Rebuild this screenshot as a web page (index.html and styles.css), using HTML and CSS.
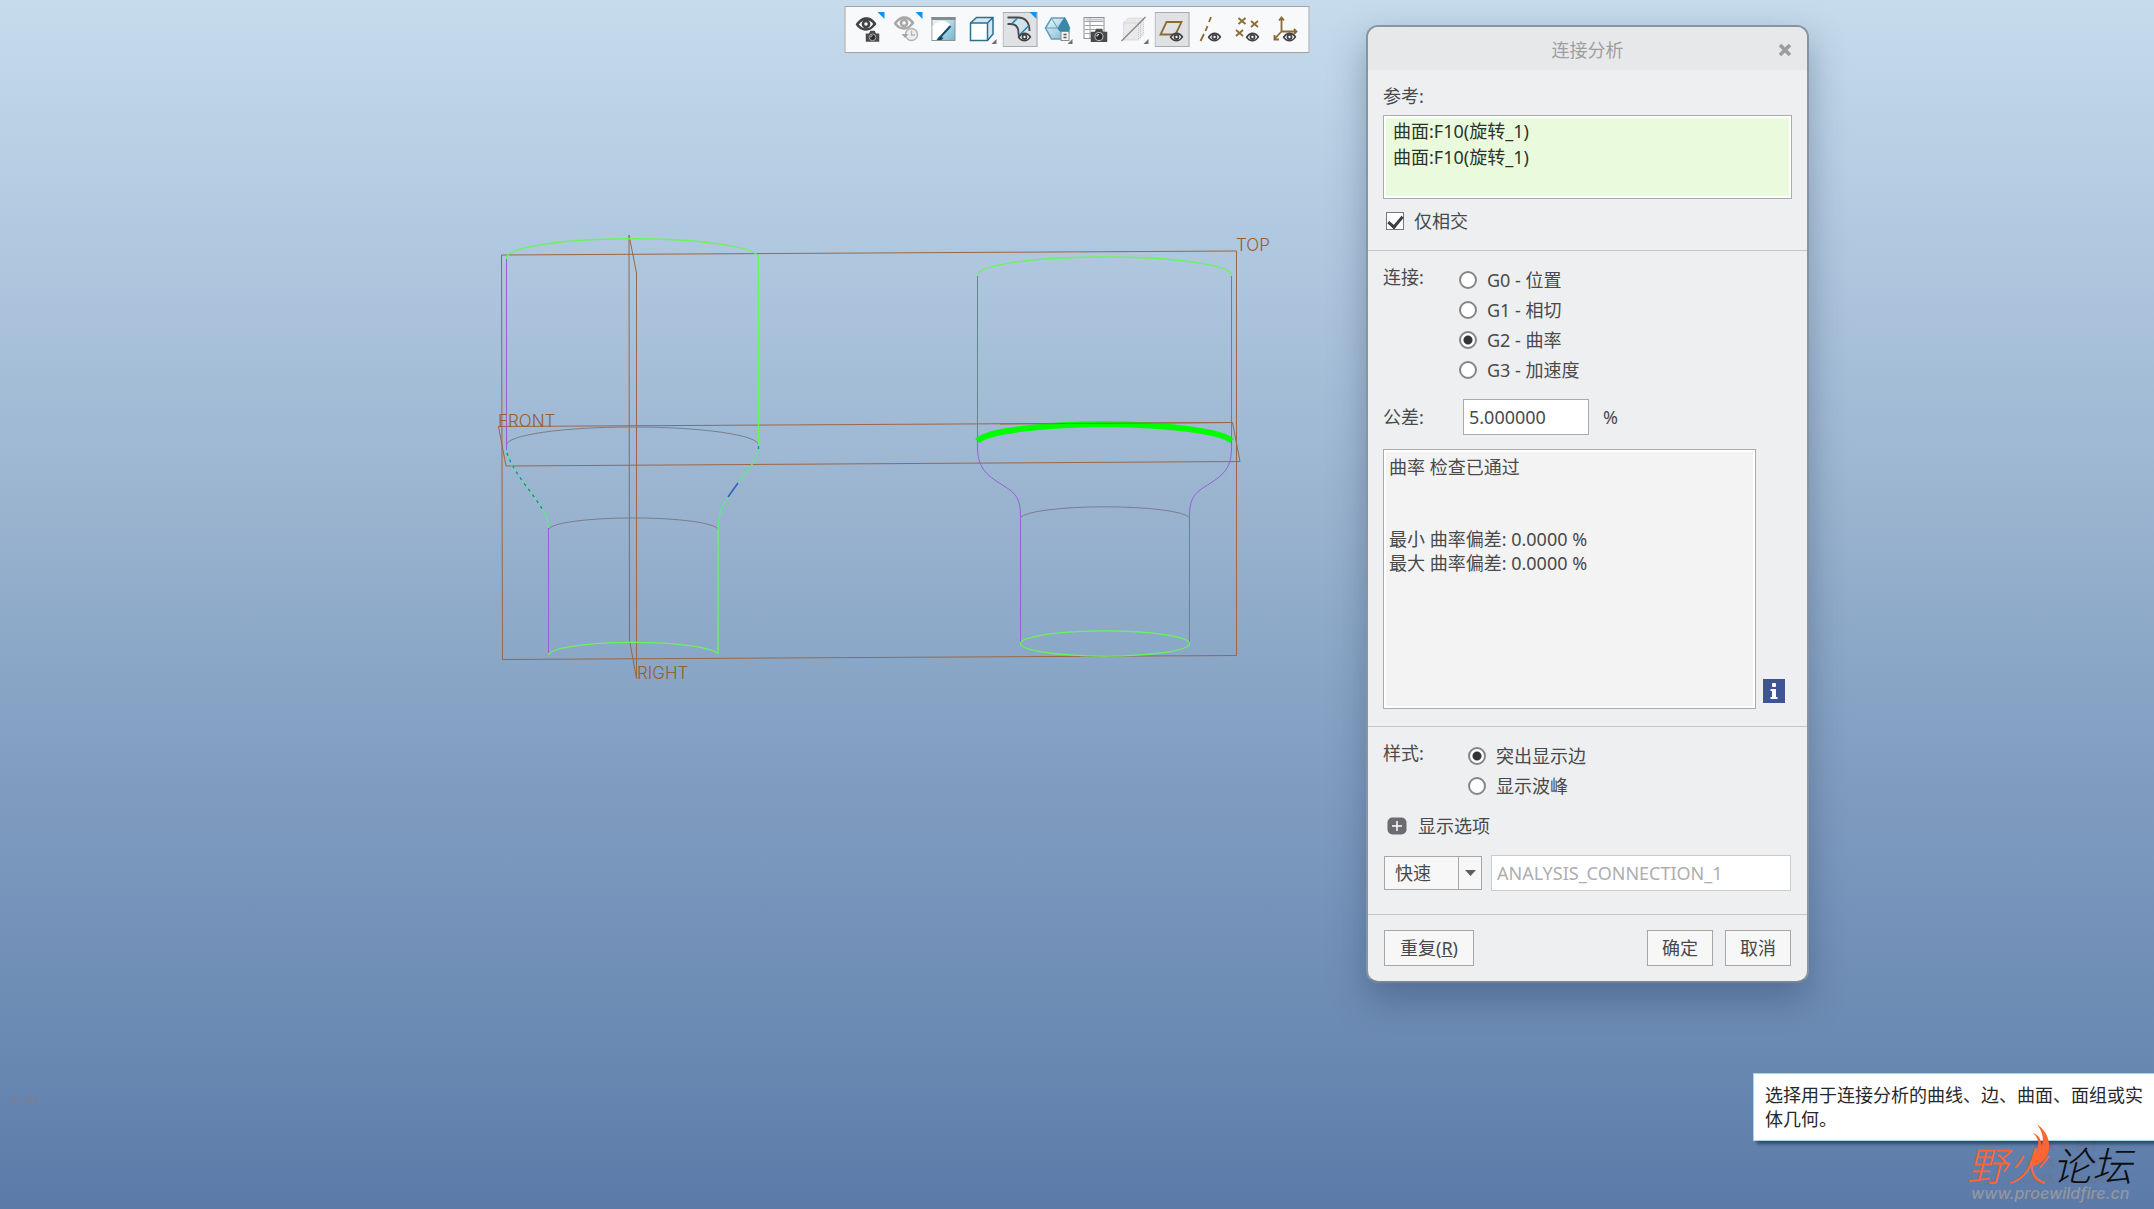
FILE: index.html
```html
<!DOCTYPE html>
<html lang="zh-CN">
<head>
    <meta charset="UTF-8">
    <meta name="viewport" content="width=device-width, initial-scale=1.0">
    <title>连接分析</title>
    <link rel="stylesheet" href="styles.css">
</head>
<body>
    <main class="viewport">
        <!-- Model view: datum planes, edges and curves -->
        <svg class="model" viewBox="0 0 2154 1209" preserveAspectRatio="xMinYMin meet" fill="none">
            <g class="datum">
                <path d="M501.5 255 L1236.5 251 V655.5 L502.5 659.5 Z"/>
                <path d="M498.5 426.5 L1232.5 422.5 L1240 461.5 L506 466 Z"/>
                <path d="M629 235 L636.5 273 V678.5 L629.5 640 Z"/>
            </g>
            <g class="edge-gray">
                <path d="M506.5 445 A126 18 0 0 1 758.5 445"/>
                <path d="M548.5 529 A85 12 0 0 1 718 529"/>
                <path d="M1020.5 517.5 A85 12 0 0 1 1189.5 517.5"/>
            </g>
            <g class="edge-purple">
                <path d="M506.5 259 V451"/>
                <path d="M548.5 523 V653"/>
                <path d="M977.5 276 V443 C977 464 982 472 1000 483.5 C1012 491 1020.5 495 1020.5 515 V642"/>
                <path d="M1231.5 276 V443 C1232 464 1228 472 1210 483.5 C1198 491 1189.5 495 1189.5 515 V642"/>
            </g>
            <g class="edge-green">
                <path d="M506.5 258.500 A126 19 0 0 1 758.5 257 V446"/>
                <path d="M718 527 V654"/>
                <path d="M548.5 655 A85 13 0 0 1 718 654"/>
                <path d="M977.5 275 A127 18 0 0 1 1231.5 275"/>
                <ellipse cx="1105" cy="643.5" rx="84.5" ry="12.7"/>
            </g>
            <g class="neck">
                <path d="M506.5 450 C507 459 514 469 523 482 L535 498 C543 509 548.5 516 548.5 528"/>
                <path d="M758.5 444 V451 C757 459 751 466 738 483 L727 499 C722 507 718 514 718 528"/>
            </g>
            <g class="neck-blue">
                <path d="M507 453 C510 462 514 469 523 482 L535 498 L543 510"/>
                <path d="M758.5 446 V453"/>
            </g>
            <path class="neck-solid" d="M738 483 L728 497"/>
            <path class="highlight" d="M977.5 441 A128 19 0 0 1 1231.5 441"/>
            <path class="datum" d="M1000 424 L1232.5 422.5"/>
            <g class="datum-name">
                <text x="498" y="427">FRONT</text>
                <text x="637" y="679">RIGHT</text>
                <text x="1236" y="251">TOP</text>
            </g>
        </svg>

        <div class="toolbar" role="toolbar">
            <svg class="symbols">
                <defs>
                    <linearGradient id="sky" x1="0" y1="0" x2="1" y2="1">
                        <stop offset="0" stop-color="#f4fbfd"/>
                        <stop offset="1" stop-color="#6fb4cf"/>
                    </linearGradient>
                </defs>
                <symbol id="eye" viewBox="0 0 22 14">
                    <path d="M0 7.5 C4 1.5 8 0 11 0 C15 0 19 2 22 7 C18 12 14.5 14 11 14 C7 14 3 12 0 7.5 Z" fill="currentColor"/>
                    <path d="M3.5 7.5 C6 4 8 3 11 3 C14 3 16.5 4 18.5 7 C16 10.5 14 11.5 11 11.5 C8 11.5 6 10.5 3.5 7.5 Z" fill="#fff"/>
                    <circle cx="11" cy="7" r="4.6" fill="currentColor"/>
                    <circle cx="11" cy="7" r="1.8" fill="#fff"/>
                </symbol>
                <symbol id="camera" viewBox="0 0 16 13">
                    <path d="M0 3.5 H4 L5.5 0.5 H10.5 L12 3.5 H16 V13 H0 Z" fill="#4b4b4d"/>
                    <circle cx="8" cy="8" r="3.8" fill="#2d2d2f" stroke="#b9b9b9"/>
                    <path d="M6 8 A2 2 0 0 1 8 6" stroke="#eee" fill="none"/>
                </symbol>
            </svg>
            <button class="tool" type="button" aria-label="视图">
                <svg viewBox="0 0 35 35">
                    <use href="#eye" x="5" y="5" width="21" height="14"/>
                    <use href="#camera" x="15" y="18" width="14" height="12"/>
                    <path class="corner" d="M27 0 H34 V7 Z"/>
                </svg>
            </button>
            <button class="tool tool-disabled" type="button" aria-label="上一视图">
                <svg viewBox="0 0 35 35">
                    <use href="#eye" x="5" y="4" width="21" height="14"/>
                    <circle cx="23" cy="22.5" r="6" fill="#eee" stroke="#b3b3b3" stroke-width="1.5"/>
                    <path d="M23 18.5 V23 H26.5" stroke="#b3b3b3" stroke-width="1.3" fill="none"/>
                    <path d="M13 22 H20 L16.5 26 Z" fill="#a5a5a5"/>
                    <path class="corner" d="M27 0 H34 V7 Z"/>
                </svg>
            </button>
            <button class="tool" type="button" aria-label="重画">
                <svg viewBox="0 0 35 35">
                    <rect x="5.5" y="5.5" width="23" height="23" fill="url(#sky)" stroke="#8d9499"/>
                    <path d="M5 5 H29 V8 H5 Z" fill="#858a8e"/>
                    <path d="M6 14 C12 7 20 8 24 13 L14 28 H6 Z" fill="#fff"/>
                    <path d="M24 14 L14 25" stroke="#0f4a6b" stroke-width="2"/>
                    <path d="M10 28 L13 24 L17 26 L15 28 Z" fill="#0f4a6b"/>
                </svg>
            </button>
            <button class="tool" type="button" aria-label="显示样式">
                <svg viewBox="0 0 35 35">
                    <path d="M6 11 L12 5.5 H29 L23 11 Z M23 11 L29 5.5 V22 L23 28 Z" fill="#d3e9f2"/>
                    <path d="M6 11 H23 V28.5 H6 Z" fill="#fff"/>
                    <path d="M6 11 L12 5.5 H28.5 V22 L23 28.5 H6 Z M6 11 H23 V28.5 M23 11 L28.5 5.5" fill="none" stroke="#2e6f8e" stroke-width="1.5"/>
                    <path class="more" d="M32 27 V32 H27 Z"/>
                </svg>
            </button>
            <button class="tool tool-active" type="button" aria-label="曲面显示">
                <svg viewBox="0 0 35 35">
                    <path d="M12 5 H15 C24 5 27 11 27 18 L19 27 C16 24 18 19 16 16 C14 13 12 12 6 12 Z" fill="#d4e3ea"/>
                    <path d="M5 5.5 H15 C24 5.5 27 11 27 19 M5 12 H8 C14 12 16 16 16 21 C16 25 17 26 19 27.5" fill="none" stroke="#4a4a4c" stroke-width="1.8"/>
                    <path d="M15 6 L9 12 M26 14 L18 22" stroke="#2687ad" stroke-width="1.6"/>
                    <use href="#eye" x="15" y="20" width="14" height="10"/>
                    <path class="corner" d="M27 0 H34 V7 Z"/>
                </svg>
            </button>
            <button class="tool" type="button" aria-label="视图管理器">
                <svg viewBox="0 0 35 35">
                    <path d="M5 16 L11 6 H24 L29 16 L24 27 H11 Z" fill="url(#sky)" stroke="#5d9fba" stroke-width="1.5"/>
                    <path d="M5 16 H17 M11 6 L17 16" fill="none" stroke="#5d9fba"/>
                    <path d="M24 5 C21 10 18 13 17 17 L21 21 H29 V15 C28 11 26 8 24 5 Z" fill="#3986a6"/>
                    <rect x="20.5" y="19.5" width="8" height="9" fill="#f6f6f6" stroke="#8c8c8c"/>
                    <path d="M23 22.5 H26 M23 25.5 H26" stroke="#555" stroke-width="1.5"/>
                    <path class="more" d="M32 27 V32 H27 Z"/>
                </svg>
            </button>
            <button class="tool" type="button" aria-label="已保存方向">
                <svg viewBox="0 0 35 35">
                    <rect x="5.5" y="5.5" width="20" height="21" fill="#fff" stroke="#8d9296"/>
                    <path d="M6 9.5 H25 M6 13.5 H25 M6 17.5 H25 M6 21.5 H25 M11.5 6 V26" stroke="#9da2a6"/>
                    <path d="M7 7.5 H25" stroke="#c6cacd" stroke-width="2"/>
                    <use href="#camera" x="12" y="16" width="17" height="14"/>
                </svg>
            </button>
            <button class="tool" type="button" aria-label="透视图">
                <svg viewBox="0 0 35 35">
                    <path d="M7 11 L12 6 H27 V22 L22 28 H7 Z" fill="#e9e9ea"/>
                    <path d="M7 11 L12 6 H27 V22 L22 28 H7 Z M7 11 H22 V28 M22 11 L27 6 M24 9 V26" fill="none" stroke="#c6c6c8" stroke-dasharray="1 1"/>
                    <path d="M5 29 L29 5" stroke="#8b8b8d" stroke-width="1.5"/>
                    <path class="more" d="M32 27 V32 H27 Z"/>
                </svg>
            </button>
            <button class="tool tool-active" type="button" aria-label="平面显示">
                <svg viewBox="0 0 35 35">
                    <path class="brass" d="M12 10 H27 L21 22.5 H6 Z"/>
                    <use href="#eye" x="15" y="20" width="14" height="10"/>
                </svg>
            </button>
            <button class="tool" type="button" aria-label="轴显示">
                <svg viewBox="0 0 35 35">
                    <path class="brass" d="M18.5 5 L16.5 10 M15 14 L13 19 M11.5 22 L8 29"/>
                    <use href="#eye" x="15" y="20" width="14" height="10"/>
                </svg>
            </button>
            <button class="tool" type="button" aria-label="点显示">
                <svg viewBox="0 0 35 35">
                    <path class="brass" d="M8 6 L15 12 M15 6 L8 12 M20.5 9 L27.5 15 M27.5 9 L20.5 15 M5.5 18 L12.5 24 M12.5 18 L5.5 24"/>
                    <use href="#eye" x="15" y="20" width="14" height="10"/>
                </svg>
            </button>
            <button class="tool" type="button" aria-label="坐标系显示">
                <svg viewBox="0 0 35 35">
                    <path class="brass" d="M13 6 V19.5 H28 M13 19.5 L6 27 M10.5 8.5 L13 5.5 L15.5 8.5 M25.5 17 L28 19.5 L25.5 22 M6 23 V27.5 H10.5"/>
                    <use href="#eye" x="14" y="20" width="14" height="10"/>
                </svg>
            </button>
        </div>

        <form class="dialog">
            <header class="dialog-title">
                <h1>连接分析</h1>
                <button class="close" type="button" aria-label="关闭">
                    <svg viewBox="0 0 14 14"><path d="M2 2 L12 12 M12 2 L2 12" stroke="#9b9c9d" stroke-width="3.6"/></svg>
                </button>
            </header>

            <section class="section references">
                <h2>参考:</h2>
                <ul class="collector">
                    <li>曲面:F10(旋转_1)</li>
                    <li>曲面:F10(旋转_1)</li>
                </ul>
                <label class="option check-option"><input class="check" type="checkbox" checked>仅相交</label>
            </section>

            <section class="section">
                <div class="group">
                    <h2>连接:</h2>
                    <div class="options">
                        <label class="option"><input class="radio" type="radio" name="connection">G0 - 位置</label>
                        <label class="option"><input class="radio" type="radio" name="connection">G1 - 相切</label>
                        <label class="option"><input class="radio" type="radio" name="connection" checked>G2 - 曲率</label>
                        <label class="option"><input class="radio" type="radio" name="connection">G3 - 加速度</label>
                    </div>
                </div>
                <div class="tolerance">
                    <label for="tolerance">公差:</label>
                    <input class="field" id="tolerance" type="text" value="5.000000">
                    <span>%</span>
                </div>
                <div class="result-row">
                    <textarea class="result" aria-label="结果" readonly>曲率 检查已通过


最小 曲率偏差: 0.0000 %
最大 曲率偏差: 0.0000 %</textarea>
                    <button class="info" type="button" aria-label="信息">
                        <svg viewBox="0 0 22 24">
                            <rect width="22" height="24" fill="#3f5493"/>
                            <rect x="9" y="4" width="4" height="4" rx="1" fill="#fff"/>
                            <path d="M7.5 10 H13 V18 H14.5 V20 H7.5 V18 H9 V12 H7.5 Z" fill="#fff"/>
                        </svg>
                    </button>
                </div>
            </section>

            <section class="section">
                <div class="group group-style">
                    <h2>样式:</h2>
                    <div class="options">
                        <label class="option"><input class="radio" type="radio" name="style" checked>突出显示边</label>
                        <label class="option"><input class="radio" type="radio" name="style">显示波峰</label>
                    </div>
                </div>
                <button class="expander" type="button">
                    <svg viewBox="0 0 20 18">
                        <rect x="0.5" y="0.5" width="19" height="17" rx="5" fill="#6c6b72"/>
                        <path d="M10 4 V14 M5 9 H15" stroke="#fff" stroke-width="1.5"/>
                    </svg>
                    显示选项
                </button>
                <div class="save-row">
                    <div class="combo">
                        <select aria-label="类型"><option>快速</option></select>
                        <svg class="combo-arrow" viewBox="0 0 24 34"><path d="M0.5 0 V34" stroke="#a5a7a9"/><path d="M7 14 H18 L12.5 20 Z" fill="#5d5e60"/></svg>
                    </div>
                    <input class="field field-name" type="text" aria-label="名称" value="ANALYSIS_CONNECTION_1" disabled>
                </div>
            </section>

            <footer class="actions">
                <button class="action repeat" type="button">重复(<u>R</u>)</button>
                <button class="action" type="button">确定</button>
                <button class="action" type="button">取消</button>
            </footer>
        </form>

        <p class="mode">插入模式</p>

        <pre class="tolerances">  X.X +-0.1
 X.XX +-0.01
X.XXX +-0.001
 ANG. +-0.5</pre>

        <p class="hint">选择用于连接分析的曲线、边、曲面、面组或实体几何。</p>

        <div class="brand">
            <div class="brand-name"><span class="brand-fire">野火</span><span>论坛</span></div>
            <div class="brand-url">www.proewildfire.cn</div>
            <svg class="flame" viewBox="0 0 20 44">
                <path d="M6 0 C14 6 19 14 18 25 C17 33 12 38 2 43 C1 38 0 35 3 31 C6 27 8 22 7 17 C6 13 4 11 2 9 C8 11 11 16 10 23 C14 15 11 7 6 0 Z" fill="#ff6431"/>
            </svg>
        </div>
    </main>
</body>
</html>
```
FILE: styles.css
```css
* {
    box-sizing: border-box;
}

body {
    margin: 0;
    font-family: 'Noto Sans', 'Noto Sans CJK SC', sans-serif;
    font-size: 18px;
    line-height: 24px;
    color: #48494b;
}

h1, h2, p, ul, pre {
    margin: 0;
    padding: 0;
    font-size: 18px;
    font-weight: normal;
}

button, input, select, textarea {
    font: inherit;
    color: inherit;
    margin: 0;
}

button {
    padding: 0;
    border: none;
    background: none;
}

svg {
    display: block;
}

.viewport {
    position: relative;
    min-height: 100vh;
    overflow: hidden;
    background: linear-gradient(#c6dbec 0%, #b1c9e0 19%, #9fb8d3 37%, #88a4c5 57%, #6888b2 88%, #5b7aa8 100%);
}

/* Model */
.model {
    position: absolute;
    top: 0;
    left: 0;
    width: 100%;
}

.datum {
    stroke: #9b6747;
}

.edge-gray {
    stroke: #7c7c8c;
}

.edge-purple {
    stroke: #955fd0;
}

.edge-green {
    stroke: #69f45c;
    stroke-width: 1.3;
}

.neck {
    stroke: #62e888;
    stroke-width: 1.3;
}

.neck-blue {
    stroke: #3c6fc0;
    stroke-width: 1.3;
    stroke-dasharray: 3 4;
}

.neck-solid {
    stroke: #3c55c8;
    stroke-width: 1.5;
}

.highlight {
    stroke: #00ff00;
    stroke-width: 6;
}

.datum-name {
    font-family: 'Inter', sans-serif;
    font-weight: 300;
    font-size: 17px;
    fill: #96602f;
}

/* Toolbar */
.toolbar {
    position: absolute;
    top: 6px;
    left: 50%;
    transform: translateX(-50%);
    display: flex;
    gap: 3px;
    padding: 5px;
    border: 1px solid #a2a2a4;
    background: #f8f9fb;
}

.symbols {
    position: absolute;
    width: 0;
    height: 0;
}

.tool {
    width: 35px;
    height: 35px;
    color: #414245;
}

.tool-disabled {
    color: #a8a8a9;
}

.tool-active {
    background: #dfe1e4;
    box-shadow: inset 0 0 0 1px #a8aaad;
}

.corner {
    fill: #0a93f5;
}

.more {
    fill: #6f6f71;
}

.brass {
    fill: none;
    stroke: #8b6b32;
    stroke-width: 1.8;
}

/* Dialog */
.dialog {
    position: absolute;
    top: 25px;
    right: 345px;
    width: 443px;
    border: 2px solid #8795a3;
    border-bottom-color: #768496;
    border-radius: 12px;
    background: #eeeff1;
    box-shadow: 0 16px 36px rgba(30, 50, 80, 0.35);
    overflow: hidden;
}

.dialog-title {
    display: grid;
    grid-template-columns: 29px 1fr 29px;
    align-items: center;
    height: 43px;
    padding-top: 2px;
    background: #e7e8e9;
    text-align: center;
}

.dialog-title h1 {
    grid-column: 2;
    color: #9d9ea0;
}

.close svg {
    width: 14px;
    height: 14px;
}

.section {
    padding: 14px 15px 17px;
    border-bottom: 1px solid #c5c7ca;
}

.collector {
    height: 84px;
    margin: 7px 0 10px;
    padding: 2px 9px;
    border: 1px solid #a9abad;
    background: #eafbdd;
    box-shadow: inset 0 0 0 2px #fff;
    list-style: none;
    line-height: 26px;
    color: #2b332b;
}

.option {
    display: flex;
    align-items: center;
    gap: 10px;
    height: 30px;
}

.check-option {
    height: 24px;
    padding-left: 3px;
}

.check, .radio {
    appearance: none;
    width: 18px;
    height: 18px;
    border: 1px solid #77787a;
    background: #fff;
}

.check {
    display: grid;
    place-items: center;
}

.check:checked::after {
    content: "";
    width: 6px;
    height: 12px;
    margin-bottom: 3px;
    border: solid #3e3f42;
    border-width: 0 3px 3px 0;
    transform: rotate(40deg);
}

.radio {
    border: 2px solid #858688;
    border-radius: 50%;
}

.radio:checked {
    background: radial-gradient(circle, #333436 4px, #fff 5px);
}

.group {
    display: grid;
    grid-template-columns: 76px 1fr;
}

.group-style {
    grid-template-columns: 85px 1fr;
}

.tolerance {
    display: grid;
    grid-template-columns: 66px 126px auto;
    column-gap: 14px;
    align-items: center;
    margin: 14px 0;
}

.field {
    min-width: 0;
    height: 36px;
    padding: 0 5px;
    border: 1px solid #a9abad;
    background: #fff;
}

.result-row {
    display: grid;
    grid-template-columns: 1fr 22px;
    gap: 7px;
    padding-right: 7px;
    align-items: end;
}

.result {
    height: 260px;
    padding: 5px;
    border: 1px solid #a9abad;
    background: #f3f3f3;
    box-shadow: inset 0 0 0 2px #fff;
    resize: none;
}

.info {
    margin-bottom: 6px;
}

.expander {
    display: flex;
    align-items: center;
    gap: 11px;
    margin: 13px 0 17px;
    padding-left: 4px;
}

.expander svg {
    width: 20px;
    height: 18px;
}

.save-row {
    display: grid;
    grid-template-columns: 98px 1fr;
    gap: 9px;
    align-items: center;
    padding: 0 1px 6px;
}

.combo {
    position: relative;
}

.combo select {
    appearance: none;
    width: 100%;
    height: 34px;
    padding: 0 10px;
    border: 1px solid #a5a7a9;
    border-radius: 0;
    background: #f7f7f8;
}

.combo-arrow {
    position: absolute;
    top: 0;
    right: 0;
    width: 24px;
    pointer-events: none;
}

.field-name {
    border-color: #c9cdd1;
    color: #adaeb0;
}

.actions {
    display: flex;
    gap: 12px;
    padding: 15px 16px;
}

.action {
    width: 66px;
    height: 36px;
    border: 1px solid #a5a7a9;
    background: #f7f7f8;
}

.repeat {
    width: 90px;
    margin-right: auto;
}

/* Status text, hint and brand */
.mode {
    position: absolute;
    left: 10px;
    bottom: 102px;
    font-size: 8px;
    line-height: 16px;
    color: #7c8090;
}

.tolerances {
    position: absolute;
    right: 42px;
    bottom: 5px;
    font-family: 'Liberation Mono', monospace;
    font-size: 12px;
    line-height: 16px;
    color: #6a7690;
}

.hint {
    position: absolute;
    right: 0;
    bottom: 68px;
    width: 401px;
    height: 68px;
    padding: 9px 11px;
    border: 1px solid #a8d3ea;
    border-right: none;
    background: #fff;
    box-shadow: 4px 3px 3px rgba(20, 35, 60, 0.6);
    color: #27282a;
}

.brand {
    position: absolute;
    right: 22px;
    bottom: 8px;
    font-style: italic;
}

.brand-name {
    display: flex;
    gap: 5px;
    font-family: 'Noto Sans CJK SC', sans-serif;
    font-size: 40px;
    font-weight: 300;
    line-height: 42px;
    color: #0b0d10;
}

.brand-fire {
    color: #ff6431;
}

.brand-url {
    padding-left: 4px;
    font-family: 'Inter', sans-serif;
    font-weight: 500;
    font-size: 16px;
    line-height: 16px;
    color: #9297a0;
}

.flame {
    position: absolute;
    left: 64px;
    top: -19px;
    width: 20px;
    height: 44px;
}
```
